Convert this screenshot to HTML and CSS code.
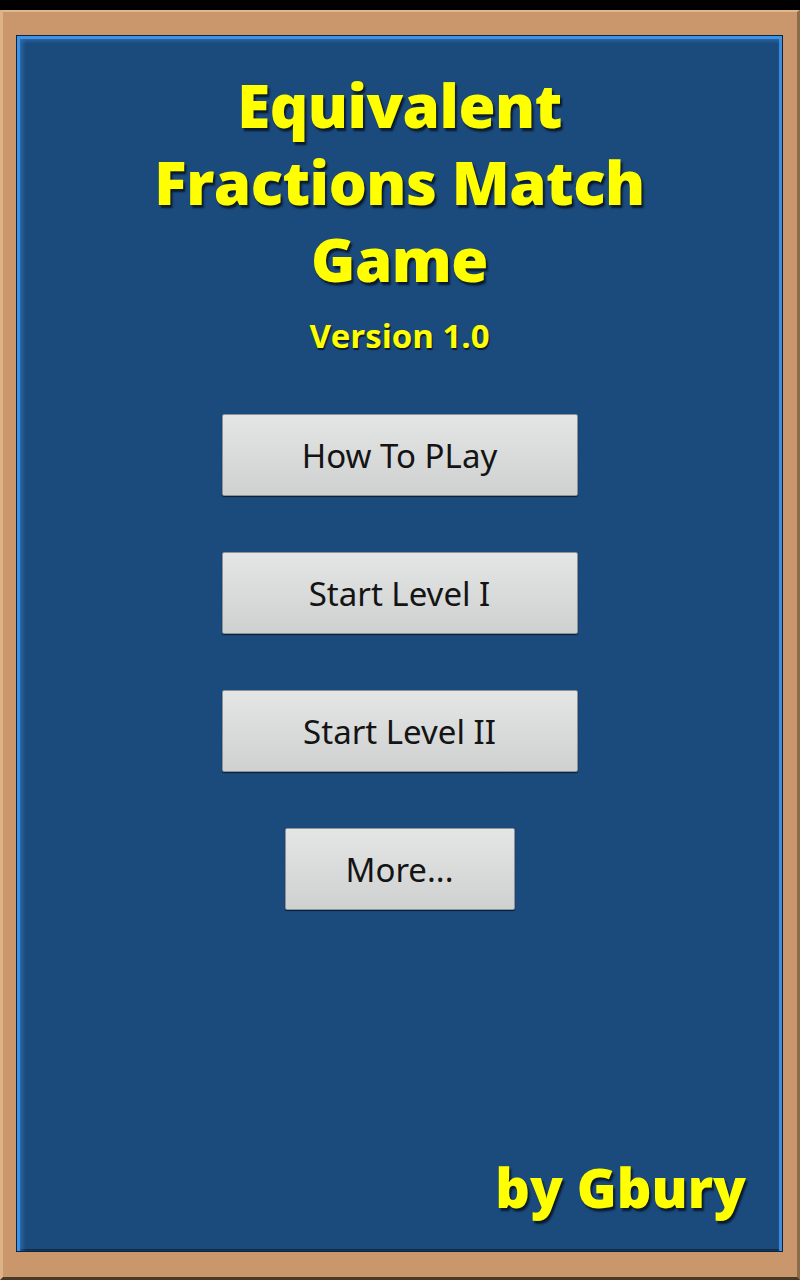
FILE: index.html
```html
<!DOCTYPE html>
<html lang="en">
<head>
    <meta charset="UTF-8">
    <meta name="viewport" content="width=device-width, initial-scale=1.0">
    <title>Equivalent Fractions Match Game</title>
    <link rel="stylesheet" href="styles.css">
</head>
<body>
    <div class="frame">
        <div class="board">
            <h1 class="title">Equivalent<br>Fractions Match<br>Game</h1>
            <p class="version">Version 1.0</p>
            <div class="menu">
                <button class="btn">How To PLay</button>
                <button class="btn">Start Level I</button>
                <button class="btn">Start Level II</button>
                <button class="btn btn-small">More...</button>
            </div>
            <p class="author">by Gbury</p>
        </div>
    </div>
</body>
</html>
```

FILE: styles.css
```css
html, body {
    margin: 0;
    padding: 0;
    background-color: #000;
}
body {
    width: 800px;
    height: 1280px;
    overflow: hidden;
    padding-top: 10px;
    box-sizing: border-box;
}
.frame {
    height: 1270px;
    box-sizing: border-box;
    background-color: #c9976b;
    border-top: 2px solid #e0b88f;
    border-left: 3px solid #ddb286;
    border-right: 3px solid #8d6a48;
    border-bottom: 3px solid #4a3826;
    padding: 23px 14px 25px 13px;
}
.board {
    height: 100%;
    box-sizing: border-box;
    background-color: #1b4a7c;
    border: 1px solid #0d2440;
    box-shadow: inset 3px 3px 0 #3d93e6, inset 7px 6px 5px -2px rgba(61, 147, 230, 0.55), inset -3px 0 1px #3b8ede, inset 0 -2px 0 #0f2c4d;
    display: flex;
    flex-direction: column;
    align-items: center;
    font-family: "Open Sans", "Noto Sans", sans-serif;
}
.title {
    margin: 31px 0 0;
    font-family: "Open Sans", sans-serif;
    font-weight: 800;
    font-size: 60px;
    line-height: 77px;
    letter-spacing: -0.5px;
    color: #ffff00;
    text-align: center;
    text-shadow: 2px 3px 2px #0a1a2c;
}
.version {
    margin: 15px 0 0;
    font-weight: 700;
    font-size: 33px;
    color: #ffff00;
    text-shadow: 1px 2px 1px #0a1a2c;
}
.menu {
    display: flex;
    flex-direction: column;
    align-items: center;
    gap: 56px;
    margin-top: 56px;
}
.btn {
    width: 356px;
    height: 82px;
    font-family: "Noto Sans", "Open Sans", sans-serif;
    font-size: 33px;
    color: #141414;
    background: linear-gradient(#e4e5e5, #cfd0d0);
    border: 1px solid #8e9398;
    border-radius: 2px;
    box-shadow: 0 1px 1px #0b1d33;
    padding: 0;
}
.btn-small {
    width: 230px;
}
.author {
    margin: auto 36px 27px auto;
    font-family: "Open Sans", sans-serif;
    font-weight: 800;
    font-size: 54px;
    color: #ffff00;
    text-shadow: 2px 3px 2px #0a1a2c;
}
```
